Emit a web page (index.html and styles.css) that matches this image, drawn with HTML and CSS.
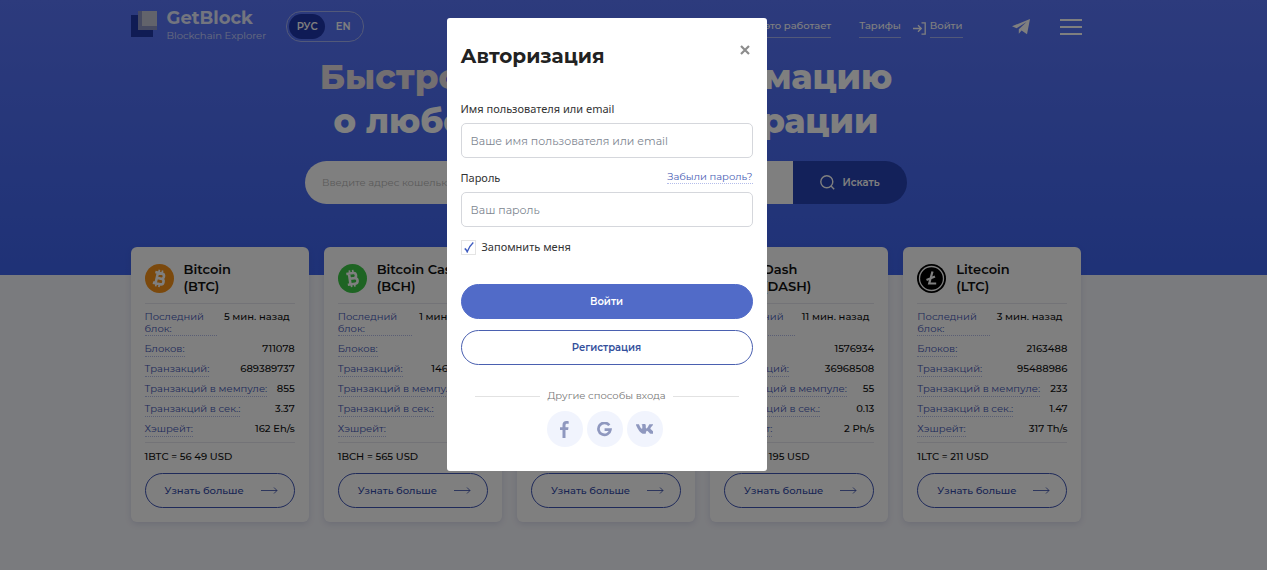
FILE: index.html
```html
<!DOCTYPE html>
<html lang="ru">
<head>
    <meta charset="UTF-8">
    <meta name="viewport" content="width=device-width, initial-scale=1.0">
    <title>GetBlock - Blockchain Explorer</title>
    <link rel="stylesheet" href="styles.css">
</head>
<body>
    <div class="hero">
        <header class="header container">
            <a href="#" class="logo">
                <svg class="logo-mark" width="27" height="26" viewBox="0 0 27 26">
                    <rect x="0" y="4" width="22" height="22" fill="#2038a8"/>
                    <rect x="7" y="0" width="19" height="19" fill="#8d94c4"/>
                    <rect x="11" y="0" width="15" height="15" fill="#c5c6d6"/>
                </svg>
                <span class="logo-text">
                    <span class="logo-name">GetBlock</span>
                    <span class="logo-sub">Blockchain Explorer</span>
                </span>
            </a>
            <div class="lang">
                <button type="button" class="lang-btn active">РУС</button>
                <button type="button" class="lang-btn">EN</button>
            </div>
            <nav class="nav">
                <a href="#" class="nav-link">Как это работает</a>
                <a href="#" class="nav-link nav-tariffs">Тарифы</a>
                <svg class="login-icon" width="13" height="13" viewBox="0 0 13 13" fill="none" stroke="#fff" stroke-width="1.3">
                    <path d="M0 6.5h8M5 3.2l3.3 3.3L5 9.8M8.5 .8h3.7v11.4H8.5"/>
                </svg>
                <a href="#" class="nav-link">Войти</a>
            </nav>
            <a href="#" class="telegram" aria-label="Telegram">
                <svg width="18" height="16" viewBox="0 0 18 16" fill="#fff">
                    <path d="M18 0L0 7.3l4.6 1.9L14.5 3 6.8 10.2v4.6l2.8-3.2 5.4 3.6z"/>
                </svg>
            </a>
            <button type="button" class="burger" aria-label="Меню"><span></span><span></span><span></span></button>
        </header>

        <h1 class="title"><span>Быстро</span> найдите информацию<br>о любой блокчейн операции</h1>

        <form class="search">
            <input type="text" class="search-input" placeholder="Введите адрес кошелька, транзакцию или блок" aria-label="Поиск">
            <button type="submit" class="search-btn">
                <svg width="15" height="15" viewBox="0 0 15 15" fill="none" stroke="#fff" stroke-width="1.4">
                    <circle cx="6.8" cy="6.8" r="6"/>
                    <path d="M11 11l3.2 3.2"/>
                </svg>
                Искать
            </button>
        </form>
    </div>

    <main>
        <div class="cards container">
            <article class="card">
                <div class="card-head">
                    <svg class="coin" viewBox="0 0 29 29">
                        <circle cx="14.5" cy="14.5" r="14.5" fill="#f7931a"/>
                        <g transform="rotate(13 14.5 14.5)" fill="none" stroke="#fff" stroke-width="2.6">
                            <path d="M9 9.2h6.8a2.5 2.5 0 0 1 0 5.2h-4h4.6a2.8 2.8 0 0 1 0 5.6H9M11.7 9v11"/>
                            <path d="M12.5 6v3M15.8 6v3M12.5 20v3M15.8 20v3" stroke-width="1.7"/>
                        </g>
                    </svg>
                    <h2>Bitcoin<br>(BTC)</h2>
                </div>
                <dl class="stats">
                    <div class="wide"><dt>Последний блок:</dt><dd>5 мин. назад</dd></div>
                    <div><dt>Блоков:</dt><dd>711078</dd></div>
                    <div><dt>Транзакций:</dt><dd>689389737</dd></div>
                    <div><dt>Транзакций в мемпуле:</dt><dd>855</dd></div>
                    <div><dt>Транзакций в сек.:</dt><dd>3.37</dd></div>
                    <div><dt>Хэшрейт:</dt><dd>162 Eh/s</dd></div>
                </dl>
                <p class="price">1BTC = 56 49 USD</p>
                <a href="#" class="more">Узнать больше
                    <svg width="17" height="7" viewBox="0 0 17 7" fill="none" stroke="currentColor" stroke-width=".8"><path d="M0 3.5h16M13 .5l3 3-3 3"/></svg>
                </a>
            </article>

            <article class="card">
                <div class="card-head">
                    <svg class="coin" viewBox="0 0 29 29">
                        <circle cx="14.5" cy="14.5" r="14.5" fill="#3cc846"/>
                        <g transform="rotate(-8 14.5 14.5)" fill="none" stroke="#fff" stroke-width="2.6">
                            <path d="M9 9.2h6.8a2.5 2.5 0 0 1 0 5.2h-4h4.6a2.8 2.8 0 0 1 0 5.6H9M11.7 9v11"/>
                            <path d="M12.5 6v3M15.8 6v3M12.5 20v3M15.8 20v3" stroke-width="1.7"/>
                        </g>
                    </svg>
                    <h2>Bitcoin Cash<br>(BCH)</h2>
                </div>
                <dl class="stats">
                    <div class="wide"><dt>Последний блок:</dt><dd>1 мин. назад</dd></div>
                    <div><dt>Блоков:</dt><dd>714250</dd></div>
                    <div><dt>Транзакций:</dt><dd>1463528109</dd></div>
                    <div><dt>Транзакций в мемпуле:</dt><dd>98</dd></div>
                    <div><dt>Транзакций в сек.:</dt><dd>0.54</dd></div>
                    <div><dt>Хэшрейт:</dt><dd>2 Eh/s</dd></div>
                </dl>
                <p class="price">1BCH = 565 USD</p>
                <a href="#" class="more">Узнать больше
                    <svg width="17" height="7" viewBox="0 0 17 7" fill="none" stroke="currentColor" stroke-width=".8"><path d="M0 3.5h16M13 .5l3 3-3 3"/></svg>
                </a>
            </article>

            <article class="card">
                <div class="card-head">
                    <svg class="coin" viewBox="0 0 29 29">
                        <circle cx="14.5" cy="14.5" r="14.5" fill="#627eea"/>
                        <path d="M14.5 5l6 10-6 3.5-6-3.5zM8.5 16.5l6 3.5 6-3.5-6 8z" fill="#fff"/>
                    </svg>
                    <h2>Ethereum<br>(ETH)</h2>
                </div>
                <dl class="stats">
                    <div class="wide"><dt>Последний блок:</dt><dd>1 мин. назад</dd></div>
                    <div><dt>Блоков:</dt><dd>13669120</dd></div>
                    <div><dt>Транзакций:</dt><dd>1361408</dd></div>
                    <div><dt>Транзакций в мемпуле:</dt><dd>120</dd></div>
                    <div><dt>Транзакций в сек.:</dt><dd>14.2</dd></div>
                    <div><dt>Хэшрейт:</dt><dd>861 Th/s</dd></div>
                </dl>
                <p class="price">1ETH = 4271 USD</p>
                <a href="#" class="more">Узнать больше
                    <svg width="17" height="7" viewBox="0 0 17 7" fill="none" stroke="currentColor" stroke-width=".8"><path d="M0 3.5h16M13 .5l3 3-3 3"/></svg>
                </a>
            </article>

            <article class="card">
                <div class="card-head">
                    <svg class="coin" viewBox="0 0 29 29">
                        <circle cx="14.5" cy="14.5" r="14.5" fill="#008de4"/>
                        <path d="M10 9h8c3 0 3 2 2 5s-2 6-5 6H8M8 14.5h6" fill="none" stroke="#fff" stroke-width="2.5"/>
                    </svg>
                    <h2>Dash<br>(DASH)</h2>
                </div>
                <dl class="stats">
                    <div class="wide"><dt>Последний блок:</dt><dd>11 мин. назад</dd></div>
                    <div><dt>Блоков:</dt><dd>1576934</dd></div>
                    <div><dt>Транзакций:</dt><dd>36968508</dd></div>
                    <div><dt>Транзакций в мемпуле:</dt><dd>55</dd></div>
                    <div><dt>Транзакций в сек.:</dt><dd>0.13</dd></div>
                    <div><dt>Хэшрейт:</dt><dd>2 Ph/s</dd></div>
                </dl>
                <p class="price">1DASH = 195 USD</p>
                <a href="#" class="more">Узнать больше
                    <svg width="17" height="7" viewBox="0 0 17 7" fill="none" stroke="currentColor" stroke-width=".8"><path d="M0 3.5h16M13 .5l3 3-3 3"/></svg>
                </a>
            </article>

            <article class="card">
                <div class="card-head">
                    <svg class="coin" viewBox="0 0 29 29">
                        <circle cx="14.5" cy="14.5" r="14.5" fill="#000"/>
                        <circle cx="14.5" cy="14.5" r="12" fill="none" stroke="#fff" stroke-width="1.3"/>
                        <path d="M15.5 7.5l-3.3 12h7M9.5 16l8.5-3.5" fill="none" stroke="#fff" stroke-width="2.2"/>
                    </svg>
                    <h2>Litecoin<br>(LTC)</h2>
                </div>
                <dl class="stats">
                    <div class="wide"><dt>Последний блок:</dt><dd>3 мин. назад</dd></div>
                    <div><dt>Блоков:</dt><dd>2163488</dd></div>
                    <div><dt>Транзакций:</dt><dd>95488986</dd></div>
                    <div><dt>Транзакций в мемпуле:</dt><dd>233</dd></div>
                    <div><dt>Транзакций в сек.:</dt><dd>1.47</dd></div>
                    <div><dt>Хэшрейт:</dt><dd>317 Th/s</dd></div>
                </dl>
                <p class="price">1LTC = 211 USD</p>
                <a href="#" class="more">Узнать больше
                    <svg width="17" height="7" viewBox="0 0 17 7" fill="none" stroke="currentColor" stroke-width=".8"><path d="M0 3.5h16M13 .5l3 3-3 3"/></svg>
                </a>
            </article>
        </div>
    </main>

    <!-- Login modal -->
    <div class="overlay">
        <div class="modal" role="dialog" aria-labelledby="modalTitle">
            <div class="modal-head">
                <h2 id="modalTitle">Авторизация</h2>
                <button type="button" class="close" aria-label="Закрыть">
                    <svg width="10" height="10" viewBox="0 0 10 10" stroke="#8c8c8c" stroke-width="2.2"><path d="M1 1l8 8M9 1L1 9"/></svg>
                </button>
            </div>
            <form id="loginForm">
                <div class="form-group">
                    <label for="username">Имя пользователя или email</label>
                    <input type="text" id="username" name="username" placeholder="Ваше имя пользователя или email">
                </div>
                <div class="form-group">
                    <div class="label-row">
                        <label for="password">Пароль</label>
                        <a href="#" class="forgot">Забыли пароль?</a>
                    </div>
                    <input type="password" id="password" name="password" placeholder="Ваш пароль">
                </div>
                <div class="remember">
                    <span class="check">
                        <input type="checkbox" id="remember" name="remember" checked>
                        <svg width="10" height="11" viewBox="0 0 10 11" fill="none" stroke="#3f5cc0" stroke-width="1.4"><path d="M.7 6.5c1.2.6 1.8 1.7 2.5 3.3C4.500 6.500 6.500 3 9.300.5"/></svg>
                    </span>
                    <label for="remember">Запомнить меня</label>
                </div>
                <button type="submit" class="btn btn-primary">Войти</button>
                <button type="button" class="btn btn-outline">Регистрация</button>
            </form>
            <div class="divider">Другие способы входа</div>
            <div class="socials">
                <a href="#" aria-label="Facebook">
                    <svg width="9" height="17" viewBox="0 0 9 17" fill="#8f98bf"><path d="M2.5 17V9H0V6.2h2.5V4C2.5 1.5 4 0 6.3 0 7.4 0 8.4.1 8.7.2v2.5H7C5.8 2.7 5.5 3.3 5.5 4.2v2h3L8.100 9H5.500v8z"/></svg>
                </a>
                <a href="#" aria-label="Google">
                    <svg width="15" height="15" viewBox="0 0 15 15" fill="none" stroke="#8f98bf" stroke-width="2.7"><path d="M12.3 3.3A6 6 0 1 0 13.4 7.7H7.6"/></svg>
                </a>
                <a href="#" aria-label="VK">
                    <svg width="17" height="10" viewBox="0 0 17 10" fill="#8f98bf"><path d="M8.2 9.8h1s.4 0 .5-.3c.2-.2.2-.5.2-.5s0-1.9.8-2.1c.9-.3 2 1.8 3.2 2.5.9.6 1.5.4 1.5.4h2s1.5-.1.7-1.3c-.1-.1-.5-.9-2.4-2.5-1.9-1.7-1.7-1.4.6-4.3C17.7.4 17 .2 17 .2h-3.200s-.4 0-.6.4c-.5 1.2-2.3 4.4-2.9 3.9-.6-.4-.5-1.6-.5-2.6C9.8.3 9.5 0 7.500 0 6.400 0 5.700.2 5.400.6c.6.2.9.5.9 2 .1 1.7-.2 2.3-.6 2.1C4.9 4.4 3.7 2 3.2.7 3 .3 2.9.2 2.5.2H.4S-.3.3.1 1.2c1.8 3.7 3.9 8.6 8.1 8.600z"/></svg>
                </a>
            </div>
        </div>
    </div>
</body>
</html>
```
FILE: styles.css
```css
* {
    box-sizing: border-box;
}

body {
    font-family: "Montserrat", Inter, sans-serif;
    margin: 0;
    padding: 0;
    min-height: 100vh;
    background: #f5f6fc;
    color: #111;
    font-size: 10px;
    overflow: hidden;
}

a {
    text-decoration: none;
    color: inherit;
}

button {
    font-family: inherit;
    cursor: pointer;
}

.container {
    width: 951px;
    max-width: 100%;
    margin: 0 auto;
}

/* Hero */
.hero {
    padding: 0 55px 71px 0;
    background: linear-gradient(180deg, #5a76fa, #3e64ee);
    color: #fff;
}

.header {
    display: flex;
    align-items: center;
    height: 53px;
}

.logo {
    display: flex;
    gap: 9px;
}

.logo-text {
    display: flex;
    flex-direction: column;
}

.logo-name {
    font-size: 18px;
    line-height: 15px;
    font-weight: 700;
    opacity: 0.85;
}

.logo-sub {
    margin-top: 3px;
    line-height: 14px;
    opacity: 0.7;
}

.lang {
    display: flex;
    margin-left: 20px;
    padding: 2px;
    border: 1px solid #a5b2f2;
    border-radius: 15px;
}

.lang-btn {
    width: 36px;
    height: 25px;
    padding: 0;
    border: none;
    border-radius: 13px;
    background: none;
    color: #fff;
    font-size: 10px;
    font-weight: 600;
}

.lang-btn.active {
    background: #1f36ac;
}

.nav {
    display: flex;
    align-items: center;
    margin-left: auto;
}

.nav-link {
    line-height: 22px;
    font-weight: 500;
    border-bottom: 1px solid #a5b2f2;
}

.nav-tariffs {
    margin-left: 28px;
}

.login-icon {
    margin: 4px 4px 0 12px;
}

.telegram {
    display: flex;
    margin-left: 49px;
}

.burger {
    display: flex;
    flex-direction: column;
    gap: 5px;
    margin-left: 30px;
    padding: 0;
    border: none;
    background: none;
}

.burger span {
    width: 22px;
    height: 2px;
    background: #fff;
}

.title {
    margin: 2px 0 18px;
    text-align: center;
    font-size: 34px;
    line-height: 44px;
    font-weight: 800;
}

.title span {
    color: #e6dfe2;
}

.search {
    display: flex;
    width: 602px;
    max-width: 100%;
    height: 43px;
    margin: 0 auto;
    border-radius: 22px;
    overflow: hidden;
}

.search-input {
    flex: 1;
    padding: 0 17px;
    border: none;
    font-family: inherit;
    font-size: 10px;
}

.search-input::placeholder {
    color: #b5b5b5;
}

.search-btn {
    display: flex;
    align-items: center;
    justify-content: center;
    gap: 7px;
    width: 114px;
    border: none;
    background: #2642b4;
    color: #fff;
    font-size: 10px;
    font-weight: 600;
}

/* Coin cards */
main {
    padding-right: 55px;
}

.cards {
    display: grid;
    grid-template-columns: repeat(5, 1fr);
    gap: 15px;
}

.card {
    margin-top: -28px;
    padding: 14px;
    border-radius: 6px;
    background: #fff;
    box-shadow: 0 2px 6px rgba(60, 70, 140, 0.15);
}

.card-head {
    display: flex;
    align-items: center;
    gap: 10px;
    padding-bottom: 8px;
    border-bottom: 1px solid #e6e6ee;
}

.coin {
    width: 29px;
    height: 29px;
}

.card h2 {
    margin: 0;
    font-size: 13px;
    line-height: 17px;
    font-weight: 600;
}

.stats {
    margin: 0;
    padding-top: 7px;
    border-bottom: 1px solid #e6e6ee;
}

.stats div {
    display: flex;
    justify-content: space-between;
    height: 20px;
}

.stats .wide {
    height: 31px;
}

.stats dt {
    height: 15px;
    line-height: 14px;
    color: #3f55b5;
    border-bottom: 1px dotted #b4bdea;
}

.stats .wide dt {
    flex: 1;
    height: 25px;
    margin-right: 7px;
    line-height: 12px;
}

.stats dd {
    margin: 0;
    line-height: 14px;
    font-weight: 500;
    white-space: nowrap;
}

.stats .wide dd {
    padding-right: 5px;
    line-height: 12px;
}

.price {
    margin: 7px 0 9px;
    line-height: 14px;
    font-weight: 500;
}

.more {
    display: flex;
    align-items: center;
    justify-content: space-between;
    height: 35px;
    padding: 0 16px 0 19px;
    border: 1px solid #3f55b5;
    border-radius: 18px;
    color: #3048a8;
    font-weight: 500;
}

/* Modal */
.overlay {
    position: fixed;
    top: 0;
    left: 0;
    right: 0;
    bottom: 0;
    padding: 18px 54px 18px 0;
    background: rgba(0, 0, 0, 0.5);
    overflow: auto;
}

.modal {
    width: 320px;
    margin: 0 auto;
    padding: 24px 14px;
    border-radius: 3px;
    background: #fff;
}

.modal-head {
    display: flex;
    justify-content: space-between;
    margin-bottom: 31px;
}

.modal-head h2 {
    margin: 0;
    font-size: 20px;
    line-height: 28px;
    font-weight: 700;
    color: #222;
}

.close {
    display: flex;
    height: 16px;
    padding: 3px;
    border: none;
    background: none;
}

.form-group {
    margin-bottom: 12px;
}

.form-group label,
.remember label {
    display: block;
    font-family: "Noto Sans", sans-serif;
    font-size: 11px;
    line-height: 16px;
    color: #333;
}

.form-group input {
    display: block;
    width: 100%;
    height: 35px;
    margin-top: 6px;
    padding: 0 9px;
    border: 1px solid #d5d7dc;
    border-radius: 5px;
    font-family: inherit;
    font-size: 11px;
}

.form-group input::placeholder {
    color: #7d8590;
}

.label-row {
    display: flex;
    justify-content: space-between;
}

.forgot {
    height: 14px;
    line-height: 14px;
    color: #4a60b5;
    border-bottom: 1px dotted #b4bdea;
}

.remember {
    display: flex;
    align-items: center;
    gap: 6px;
    margin-bottom: 29px;
}

.check {
    position: relative;
    display: flex;
}

.check input {
    appearance: none;
    width: 15px;
    height: 15px;
    margin: 0;
    border: 1px solid #e4e4e4;
}

.check svg {
    position: absolute;
    left: 3px;
    top: 2px;
    pointer-events: none;
}

.btn {
    display: block;
    width: 100%;
    height: 35px;
    margin-bottom: 11px;
    border: 1px solid #4a60b0;
    border-radius: 18px;
    background: #fff;
    color: #34509c;
    font-size: 10px;
    font-weight: 600;
}

.btn-primary {
    background: #516bc8;
    border-color: #516bc8;
    color: #fff;
}

.divider {
    display: flex;
    align-items: center;
    gap: 7px;
    margin: 24px 14px 8px;
    line-height: 14px;
    color: #777;
}

.divider::before,
.divider::after {
    content: "";
    flex: 1;
    height: 1px;
    background: #e2e2e2;
}

.socials {
    display: flex;
    justify-content: center;
    gap: 4px;
    padding-right: 4px;
}

.socials a {
    display: flex;
    align-items: center;
    justify-content: center;
    width: 36px;
    height: 36px;
    border-radius: 50%;
    background: #f1f4fd;
}
```
